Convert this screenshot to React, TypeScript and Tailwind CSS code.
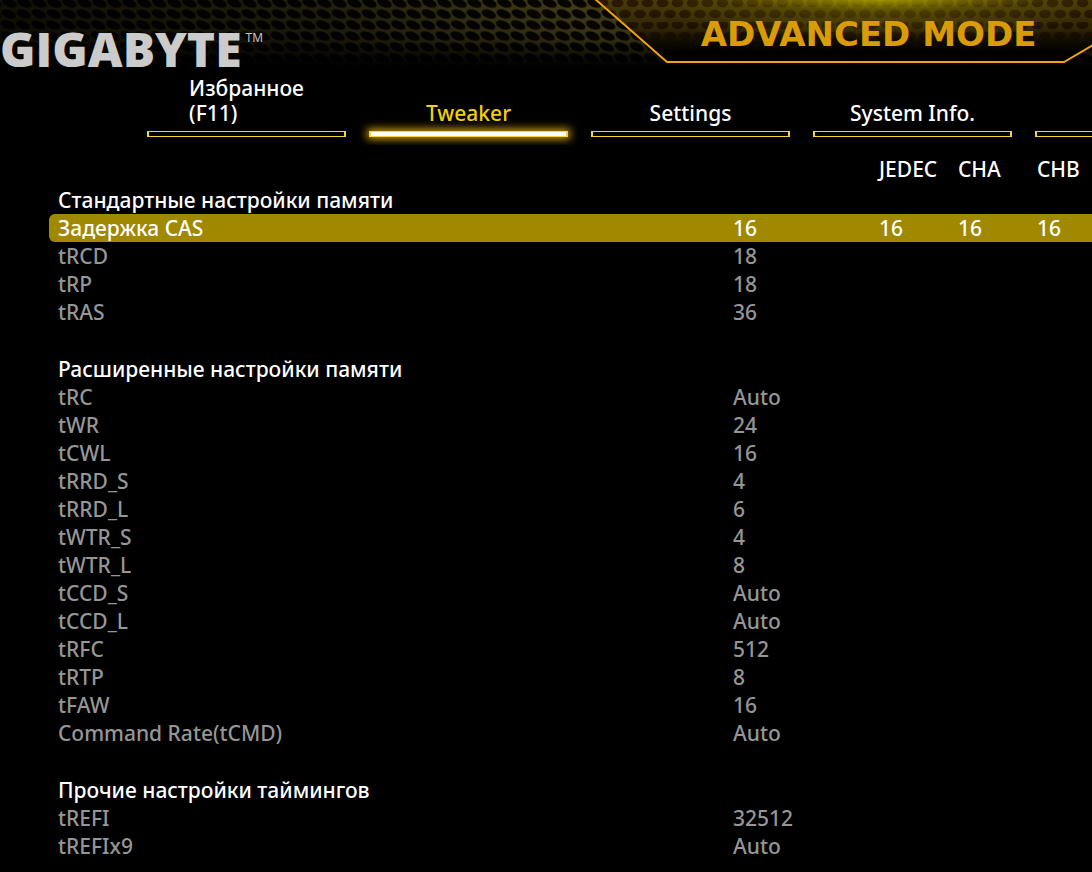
import type React from "react"

interface Timing {
  name: string
  value: string
  jedec?: string
  cha?: string
  chb?: string
  selected?: boolean
}

interface TimingGroup {
  title: string
  items: Timing[]
}

interface Tab {
  label: string
  active?: boolean
}

const tabs: Tab[] = [
  { label: "Избранное\n(F11)" },
  { label: "Tweaker", active: true },
  { label: "Settings" },
  { label: "System Info." },
  { label: "" },
]

const groups: TimingGroup[] = [
  {
    title: "Стандартные настройки памяти",
    items: [
      { name: "Задержка CAS", value: "16", jedec: "16", cha: "16", chb: "16", selected: true },
      { name: "tRCD", value: "18" },
      { name: "tRP", value: "18" },
      { name: "tRAS", value: "36" },
    ],
  },
  {
    title: "Расширенные настройки памяти",
    items: [
      { name: "tRC", value: "Auto" },
      { name: "tWR", value: "24" },
      { name: "tCWL", value: "16" },
      { name: "tRRD_S", value: "4" },
      { name: "tRRD_L", value: "6" },
      { name: "tWTR_S", value: "4" },
      { name: "tWTR_L", value: "8" },
      { name: "tCCD_S", value: "Auto" },
      { name: "tCCD_L", value: "Auto" },
      { name: "tRFC", value: "512" },
      { name: "tRTP", value: "8" },
      { name: "tFAW", value: "16" },
      { name: "Command Rate(tCMD)", value: "Auto" },
    ],
  },
  {
    title: "Прочие настройки таймингов",
    items: [
      { name: "tREFI", value: "32512" },
      { name: "tREFIx9", value: "Auto" },
    ],
  },
]

// Mesh backdrop, fades out towards the tabs
const HeaderMesh: React.FC = () => (
  <svg className="absolute inset-0 w-full h-full" aria-hidden="true">
    <defs>
      <pattern id="mesh" width="15" height="22" patternUnits="userSpaceOnUse" patternTransform="skewX(32)">
        <rect width="15" height="22" fill="#6b6324" />
        <ellipse cx="7.5" cy="3" rx="6.6" ry="4.6" fill="#0c0703" />
        <ellipse cx="7.5" cy="25" rx="6.6" ry="4.6" fill="#0c0703" />
        <ellipse cx="0" cy="14" rx="6.6" ry="4.6" fill="#0c0703" />
        <ellipse cx="15" cy="14" rx="6.6" ry="4.6" fill="#0c0703" />
      </pattern>
      <linearGradient id="fadeDown" x1="0" y1="0" x2="0" y2="1">
        <stop offset="0" stopColor="#000" stopOpacity="0.35" />
        <stop offset="0.5" stopColor="#000" stopOpacity="0.5" />
        <stop offset="0.92" stopColor="#000" stopOpacity="1" />
      </linearGradient>
      <linearGradient id="fadeLeft" x1="0" y1="0" x2="1" y2="0">
        <stop offset="0" stopColor="#000" stopOpacity="0.75" />
        <stop offset="0.3" stopColor="#000" stopOpacity="0.5" />
        <stop offset="0.55" stopColor="#000" stopOpacity="0" />
      </linearGradient>
    </defs>
    <rect width="100%" height="100%" fill="url(#mesh)" />
    <rect width="100%" height="100%" fill="url(#fadeLeft)" />
    <rect width="100%" height="100%" fill="url(#fadeDown)" />
  </svg>
)

const ModePanel: React.FC = () => (
  <svg className="absolute inset-0 w-full h-full" viewBox="0 0 497 72" preserveAspectRatio="none" aria-hidden="true">
    <defs>
      <pattern id="panelMesh" width="15" height="22" patternUnits="userSpaceOnUse">
        <ellipse cx="7.5" cy="3" rx="6" ry="4.2" fill="#2c1902" />
        <ellipse cx="0" cy="14" rx="6" ry="4.2" fill="#2c1902" />
        <ellipse cx="15" cy="14" rx="6" ry="4.2" fill="#2c1902" />
      </pattern>
      <linearGradient id="panelBase" x1="0" y1="0" x2="0" y2="1">
        <stop offset="0" stopColor="#4a3b06" />
        <stop offset="0.5" stopColor="#453606" />
        <stop offset="0.88" stopColor="#0c0800" />
      </linearGradient>
      <linearGradient id="panelFade" x1="0" y1="0" x2="0" y2="1">
        <stop offset="0" stopColor="#000" stopOpacity="0" />
        <stop offset="0.45" stopColor="#000" stopOpacity="0.3" />
        <stop offset="0.85" stopColor="#000" stopOpacity="0.92" />
      </linearGradient>
      <radialGradient id="glow" gradientUnits="userSpaceOnUse" r="1" gradientTransform="translate(285 0) scale(230 40)" cx="0" cy="0">
        <stop offset="0" stopColor="#a89c00" stopOpacity="0.5" />
        <stop offset="0.5" stopColor="#8a7a00" stopOpacity="0.25" />
        <stop offset="1" stopColor="#8a7a00" stopOpacity="0" />
      </radialGradient>
      <radialGradient id="glowEdge" gradientUnits="userSpaceOnUse" r="1" gradientTransform="translate(285 0) scale(170 9)" cx="0" cy="0">
        <stop offset="0" stopColor="#b0a800" stopOpacity="0.7" />
        <stop offset="1" stopColor="#a09600" stopOpacity="0" />
      </radialGradient>
    </defs>
    <path d="M0 0 L72 62 H469 L497 46 V0 Z" fill="url(#panelBase)" />
    <path d="M0 0 L72 62 H469 L497 46 V0 Z" fill="url(#panelMesh)" />
    <path d="M0 0 L72 62 H469 L497 46 V0 Z" fill="url(#panelFade)" />
    <path d="M0 0 L72 62 H469 L497 46 V0 Z" fill="url(#glow)" />
    <path d="M0 0 L72 62 H469 L497 46 V0 Z" fill="url(#glowEdge)" />
    <path d="M0 -1 L72 62 H469 L498 45" fill="none" stroke="#f0a30c" strokeWidth="2" />
  </svg>
)

const Header: React.FC = () => (
  <header className="relative flex h-[72px] justify-between">
    <HeaderMesh />
    <div className="relative flex items-start pt-7">
      <span className="font-['Open_Sans',sans-serif] text-[48px] leading-[42px] font-extrabold text-[#cbcbcb]">
        GIGABYTE
      </span>
      <span className="pl-1 font-['Open_Sans',sans-serif] text-[12px] leading-5 text-[#cbcbcb]">TM</span>
    </div>
    <div className="relative flex w-[497px] justify-center pt-3 pl-[50px]">
      <ModePanel />
      <h1 className="relative font-['DejaVu_Sans',sans-serif] text-[34px] leading-[44px] font-bold whitespace-nowrap text-[#d99b08]">
        ADVANCED MODE
      </h1>
    </div>
  </header>
)

const TabBar: React.FC = () => (
  <nav className="flex items-end gap-[23px] overflow-hidden pt-1 pb-2 pl-[147px]">
    {tabs.map((tab, i) => (
      <button key={i} type="button" aria-label={tab.label || "BIOS"} className="flex w-[199px] shrink-0 flex-col">
        <span
          className={`flex w-full justify-center pb-[5px] text-left leading-[25px] font-medium whitespace-pre ${
            tab.active ? "text-[#f5cf0b]" : "text-white"
          }`}
        >
          {tab.label}
        </span>
        <span
          className={`h-[6px] w-full border border-x-2 border-[#f8d23c] ${
            tab.active ? "bg-white shadow-[0_0_8px_2px_#d9a810]" : "bg-black"
          }`}
        ></span>
      </button>
    ))}
  </nav>
)

const TimingRow: React.FC<{ item: Timing }> = ({ item }) => {
  const cell = item.selected ? "bg-[#a08800] text-white" : "text-[#969696]"

  return (
    <tr className="h-7">
      <th scope="row" className={`rounded-l-md pl-[9px] text-left font-medium ${cell}`}>
        {item.name}
      </th>
      <td className={cell}>{item.value}</td>
      <td className={cell}>{item.jedec}</td>
      <td className={cell}>{item.cha}</td>
      <td className={cell}>{item.chb}</td>
    </tr>
  )
}

export default function App() {
  return (
    <div className="min-h-screen overflow-hidden bg-black font-['Noto_Sans',sans-serif] text-[21px] leading-7 font-medium text-white">
      <Header />
      <TabBar />

      <main className="pt-2.5 pl-[49px]">
        <table className="w-full table-fixed border-separate border-spacing-0">
          <colgroup>
            <col />
            <col className="w-[146px]" />
            <col className="w-[79px]" />
            <col className="w-[79px]" />
            <col className="w-[55px]" />
          </colgroup>
          <thead>
            <tr className="h-[31px] text-left align-top">
              <td></td>
              <td></td>
              <th className="font-medium">JEDEC</th>
              <th className="font-medium">CHA</th>
              <th className="font-medium">CHB</th>
            </tr>
          </thead>
          {groups.map((group, i) => (
            <tbody key={group.title}>
              {i > 0 && (
                <tr className="h-[29px]">
                  <td colSpan={5}></td>
                </tr>
              )}
              <tr className="h-7">
                <th colSpan={5} scope="rowgroup" className="pl-[9px] text-left font-medium">
                  {group.title}
                </th>
              </tr>
              {group.items.map((item) => (
                <TimingRow key={item.name} item={item} />
              ))}
            </tbody>
          ))}
        </table>
      </main>
    </div>
  )
}
